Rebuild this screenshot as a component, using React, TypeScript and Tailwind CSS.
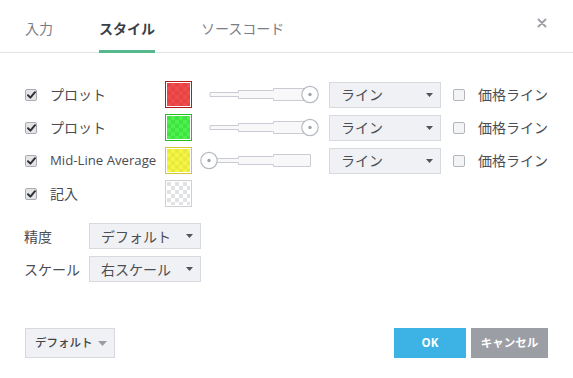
import React from "react";

function Check({ checked }: { checked: boolean }) {
  if (checked) {
    return (
      <div className="w-[12px] h-[12px] rounded-[2px] border border-[#a9abb0] bg-[#e4e5e7] flex items-center justify-center">
        <svg width="9" height="8" viewBox="0 0 9 8" className="block">
          <path d="M1 4.2 L3.4 6.6 L8 1.2" fill="none" stroke="#2f3237" strokeWidth="2" strokeLinecap="round" strokeLinejoin="round" />
        </svg>
      </div>
    );
  }
  return <div className="w-[12px] h-[12px] rounded-[2px] border border-[#b3b5ba] bg-[#f3f4f6]" />;
}

function Swatch({ id, borderCls, a, b }: { id: string; borderCls: string; a: string; b: string }) {
  return (
    <div className={`w-[27px] h-[27px] border p-px bg-white ${borderCls}`}>
      <svg width="23" height="23" className="block">
        <defs>
          <pattern id={id} width="8" height="8" patternUnits="userSpaceOnUse">
            <rect width="8" height="8" fill={a} />
            <rect width="4" height="4" fill={b} />
            <rect x="4" y="4" width="4" height="4" fill={b} />
          </pattern>
        </defs>
        <rect width="23" height="23" fill={`url(#${id})`} />
      </svg>
    </div>
  );
}

function Slider({ pos }: { pos: "left" | "right" }) {
  const cx = pos === "right" ? 112 : 11;
  return (
    <svg width="125" height="27" viewBox="0 0 125 27" className="block ml-[6px]">
      <path
        d="M12 11.5 H40.5 V9.5 H75.5 V7.5 H112.5 V19.5 H75.5 V17.5 H40.5 V15.5 H12 Z"
        fill="#f8f8f9"
        stroke="#c9ccd2"
        strokeWidth="1"
      />
      <circle cx={cx} cy="13.5" r="8.2" fill="#ffffff" stroke="#b6bac3" strokeWidth="1.2" />
      <circle cx={cx} cy="13.5" r="1.7" fill="#9ea2ab" />
    </svg>
  );
}

function Caret({ color = "#50545c" }: { color?: string }) {
  return (
    <svg width="7" height="4" viewBox="0 0 7 4" className="block">
      <path d="M0 0 H7 L3.5 4 Z" fill={color} />
    </svg>
  );
}

function Select({ label, w }: { label: string; w: string }) {
  return (
    <div className={`${w} h-[26px] border border-[#d6d9de] bg-[#f0f1f4] flex items-center justify-between pl-[11px] pr-[7px] text-[14px] text-[#4a4d52]`}>
      <span>{label}</span>
      <Caret />
    </div>
  );
}

type RowProps = {
  label: string;
  latin?: boolean;
  swatch: { id: string; borderCls: string; a: string; b: string };
  slider?: "left" | "right";
};

function Row({ label, latin, swatch, slider }: RowProps) {
  return (
    <div className="flex items-center h-[27px]">
      <div className="w-[25px]">
        <Check checked />
      </div>
      <div className={`w-[115px] text-[#4a4d52] whitespace-nowrap ${latin ? "text-[13.2px]" : "text-[14px]"}`}>{label}</div>
      <Swatch {...swatch} />
      {slider && (
        <>
          <div className="w-[137px]">
            <Slider pos={slider} />
          </div>
          <Select label="ライン" w="w-[112px]" />
          <div className="ml-[12px]">
            <Check checked={false} />
          </div>
          <div className="ml-[13px] text-[14px] text-[#4a4d52] whitespace-nowrap">価格ライン</div>
        </>
      )}
    </div>
  );
}

export default function App() {
  return (
    <div className="w-[573px] h-[378px] bg-white flex flex-col font-['Open_Sans','Noto_Sans_CJK_JP',sans-serif] overflow-hidden">
      <div className="h-[53px] border-b border-[#e0e2e5] flex items-stretch px-[25px] shrink-0">
        <div className="flex gap-[46px]">
          <div className="flex items-center pt-[5px] text-[14px] text-[#7b7e84]">入力</div>
          <div className="relative flex items-center pt-[5px] text-[14px] font-bold text-[#3b3f47]">
            スタイル
            <div className="absolute left-0 right-0 bottom-[-1px] h-[3px] bg-[#56b98d]" />
          </div>
          <div className="flex items-center pt-[5px] text-[14px] text-[#7b7e84]">ソースコード</div>
        </div>
        <div className="ml-auto flex items-start pt-[18px] pr-[1px]">
          <svg width="10" height="10" viewBox="0 0 10 10" className="block">
            <path d="M1.5 1.5 L8.5 8.5 M8.5 1.5 L1.5 8.5" stroke="#9fa3aa" strokeWidth="2" strokeLinecap="round" />
          </svg>
        </div>
      </div>

      <div className="pl-[25px] pt-[28px] flex flex-col gap-[6px]">
        <Row label="プロット" swatch={{ id: "p1", borderCls: "border-[#b51b1d]", a: "#f24b4b", b: "#e44444" }} slider="right" />
        <Row label="プロット" swatch={{ id: "p2", borderCls: "border-[#1fc21f]", a: "#4cf24c", b: "#42e242" }} slider="right" />
        <Row label="Mid-Line Average" latin swatch={{ id: "p3", borderCls: "border-[#d4c733]", a: "#f5f545", b: "#e8e83d" }} slider="left" />
        <Row label="記入" swatch={{ id: "p4", borderCls: "border-[#cfd0d3]", a: "#ffffff", b: "#e1e2e4" }} />
      </div>

      <div className="pl-[24px] mt-[16px] flex flex-col gap-[7px]">
        <div className="flex items-center">
          <div className="w-[65px] text-[14px] text-[#4a4d52]">精度</div>
          <Select label="デフォルト" w="w-[112px]" />
        </div>
        <div className="flex items-center">
          <div className="w-[65px] text-[14px] text-[#4a4d52] whitespace-nowrap">スケール</div>
          <Select label="右スケール" w="w-[112px]" />
        </div>
      </div>

      <div className="mt-auto mb-[20px] px-[25px] flex items-center">
        <div className="w-[90px] h-[30px] border border-[#d6d9de] bg-[#f0f1f4] flex items-center justify-between pl-[9px] pr-[7px] text-[11.5px] font-medium text-[#43464b]">
          <span>デフォルト</span>
          <svg width="9" height="5" viewBox="0 0 9 5" className="block">
            <path d="M0 0 H9 L4.5 5 Z" fill="#9a9da3" />
          </svg>
        </div>
        <div className="ml-auto flex gap-[5px]">
          <div className="w-[72px] h-[30px] bg-[#3cb3e4] text-white text-[11.5px] font-bold flex items-center justify-center">OK</div>
          <div className="w-[77px] h-[30px] bg-[#9c9ea6] text-white text-[11.5px] font-bold flex items-center justify-center">キャンセル</div>
        </div>
      </div>
    </div>
  );
}
